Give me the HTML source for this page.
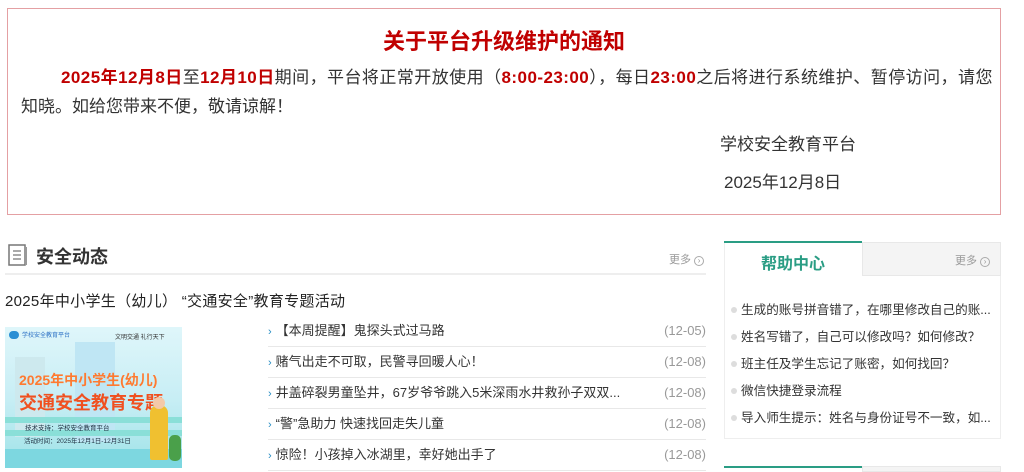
<!DOCTYPE html>
<html><head><meta charset="utf-8"><style>
*{margin:0;padding:0;box-sizing:border-box}
body{width:1024px;height:472px;overflow:hidden;background:#fff;font-family:"Liberation Sans","Noto Sans CJK SC",sans-serif;color:#333;position:relative}
.abs{position:absolute;white-space:nowrap}
.notice{position:absolute;left:7px;top:8px;width:994px;height:207px;border:1px solid #e4a0a3}
.red{color:#c00000;font-weight:bold}
.t{font-size:17px;color:#333}
.li{position:absolute;left:268px;width:438px;height:31px;border-bottom:1px solid #e8e8e8;font-size:13px;color:#333;line-height:30px}
.li .d{position:absolute;right:0;top:0;color:#999}
.li .ar{color:#2a8fc4;font-size:11px;margin-right:4px}
.hi{position:absolute;left:731px;font-size:12.6px;color:#333}
.hi:before{content:"";display:inline-block;width:6px;height:6px;border-radius:3px;background:#ddd;margin-right:4px;vertical-align:middle;position:relative;top:-1px}
</style></head><body>
<div class="notice"></div>
<div class="abs red" style="left:0;width:1008px;text-align:center;top:24px;font-size:22px">关于平台升级维护的通知</div>
<div class="abs t" style="left:61px;top:63px;letter-spacing:0.45px"><span class="red">2025年12月8日</span>至<span class="red">12月10日</span>期间，平台将正常开放使用（<span class="red">8:00-23:00</span>），每日<span class="red">23:00</span>之后将进行系统维护、暂停访问，请您</div>
<div class="abs t" style="left:21px;top:92px">知晓。如给您带来不便，敬请谅解！</div>
<div class="abs t" style="left:720px;top:130px">学校安全教育平台</div>
<div class="abs t" style="left:724px;top:168px">2025年12月8日</div>

<svg class="abs" style="left:8px;top:244px" width="20" height="22" viewBox="0 0 20 22"><rect x="1" y="1" width="16" height="20" fill="none" stroke="#777" stroke-width="1.5"/><rect x="17" y="3" width="2" height="18" fill="#999"/><path d="M5 7h8M5 11h8M5 15h8" stroke="#777" stroke-width="1.3"/></svg>
<div class="abs" style="left:36px;top:243px;font-size:18px;font-weight:bold;color:#333">安全动态</div>
<div class="abs" style="left:669px;top:251px;font-size:11px;color:#999">更多 <span style="display:inline-block;width:10px;height:10px;border:1px solid #aaa;border-radius:50%;font-size:8px;line-height:8px;text-align:center">›</span></div>
<div class="abs" style="left:5px;top:273px;width:701px;height:2px;background:#eee"></div>
<div class="abs" style="left:5px;top:290px;font-size:15px;color:#222;letter-spacing:0.3px">2025年中小学生（幼儿）&nbsp;“交通安全”教育专题活动</div>

<div class="abs" style="left:5px;top:327px;width:177px;height:141px;background:linear-gradient(180deg,#dff6fa 0%,#c8eef5 50%,#9fe3e7 100%);overflow:hidden">
<div class="abs" style="left:70px;top:15px;width:40px;height:100px;background:#bfe6f4"></div>
<div class="abs" style="left:10px;top:30px;width:30px;height:80px;background:#cde9ee"></div>
<div class="abs" style="left:0;top:90px;width:177px;height:6px;background:#8adfd8"></div>
<div class="abs" style="left:0;top:103px;width:177px;height:6px;background:#8adfd8"></div>
<div class="abs" style="left:0;top:122px;width:177px;height:19px;background:#7dd7e0"></div>
<div class="abs" style="left:4px;top:4px;width:10px;height:8px;border-radius:5px;background:#2a8fd4"></div>
<div class="abs" style="left:17px;top:3px;font-size:6px;color:#2a6fc4">学校安全教育平台</div>
<div class="abs" style="left:110px;top:5px;font-size:6px;color:#333">文明交通 礼行天下</div>
<div class="abs" style="left:14px;top:43px;font-size:14px;font-weight:bold;color:#ff7a30">2025年中小学生(幼儿)</div>
<div class="abs" style="left:14px;top:62px;font-size:18px;font-weight:bold;color:#f05020">交通安全教育专题</div>
<div class="abs" style="left:20px;top:95px;font-size:6.5px;color:#234">技术支持：学校安全教育平台</div>
<div class="abs" style="left:19px;top:108px;font-size:6.5px;color:#234">活动时间：2025年12月1日-12月31日</div>
<div class="abs" style="left:145px;top:78px;width:18px;height:55px;border-radius:8px 8px 2px 2px;background:#f0c030"></div>
<div class="abs" style="left:148px;top:70px;width:12px;height:12px;border-radius:6px;background:#f4c9a8"></div>
<div class="abs" style="left:164px;top:108px;width:12px;height:26px;border-radius:5px;background:#4aa04a"></div>
</div>

<div class="li" style="top:316px"><span class="ar">›</span>【本周提醒】鬼探头式过马路<span class="d">(12-05)</span></div>
<div class="li" style="top:347px"><span class="ar">›</span>赌气出走不可取，民警寻回暖人心！<span class="d">(12-08)</span></div>
<div class="li" style="top:378px"><span class="ar">›</span>井盖碎裂男童坠井，67岁爷爷跳入5米深雨水井救孙子双双...<span class="d">(12-08)</span></div>
<div class="li" style="top:409px"><span class="ar">›</span>“警”急助力 快速找回走失儿童<span class="d">(12-08)</span></div>
<div class="li" style="top:440px"><span class="ar">›</span>惊险！小孩掉入冰湖里，幸好她出手了<span class="d">(12-08)</span></div>

<div class="abs" style="left:724px;top:242px;width:277px;height:197px;border:1px solid #eee;border-top:none"></div>
<div class="abs" style="left:862px;top:242px;width:139px;height:34px;background:#f4f4f4;border:1px solid #e8e8e8"></div>
<div class="abs" style="left:724px;top:241px;width:138px;height:2px;background:#2a9d84"></div>
<div class="abs" style="left:761px;top:250px;font-size:16px;font-weight:bold;color:#2a9d84">帮助中心</div>
<div class="abs" style="left:955px;top:252px;font-size:11px;color:#999">更多 <span style="display:inline-block;width:10px;height:10px;border:1px solid #aaa;border-radius:50%;font-size:8px;line-height:8px;text-align:center">›</span></div>
<div class="hi" style="top:299px">生成的账号拼音错了，在哪里修改自己的账...</div>
<div class="hi" style="top:326px">姓名写错了，自己可以修改吗？如何修改？</div>
<div class="hi" style="top:353px">班主任及学生忘记了账密，如何找回？</div>
<div class="hi" style="top:380px">微信快捷登录流程</div>
<div class="hi" style="top:407px">导入师生提示：姓名与身份证号不一致，如...</div>
<div class="abs" style="left:724px;top:466px;width:138px;height:2px;background:#2a9d84"></div>
<div class="abs" style="left:862px;top:466px;width:139px;height:6px;background:#f4f4f4;border:1px solid #e8e8e8"></div>
</body></html>
